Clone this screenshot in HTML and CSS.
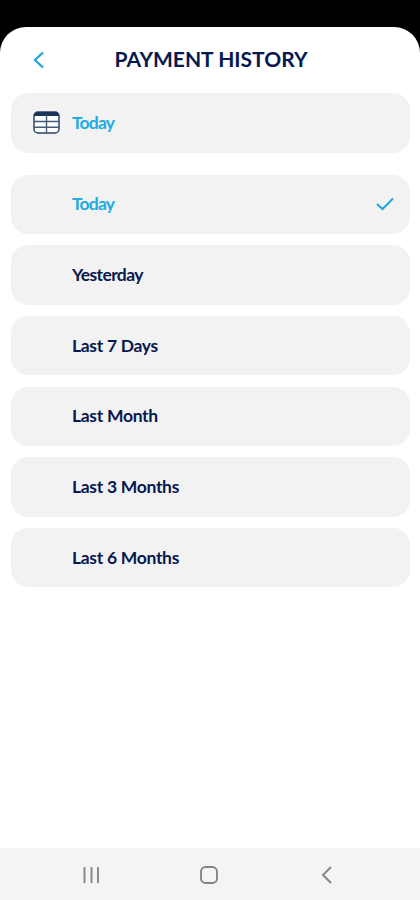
FILE: index.html
```html
<!DOCTYPE html>
<html lang="en">
<head>
    <meta charset="UTF-8">
    <meta name="viewport" content="width=device-width, initial-scale=1.0">
    <title>Payment History</title>
    <link rel="stylesheet" href="styles.css">
</head>
<body>

<div class="screen">
    <header class="header">
        <button class="back" aria-label="Back">
            <svg width="12" height="18" viewBox="0 0 12 18"><path d="M10 1.5L2 9l8 7.5"/></svg>
        </button>
        <h1 class="title">PAYMENT HISTORY</h1>
    </header>

    <main class="content">
        <button class="row selected">
            <svg class="calendar" width="27" height="23" viewBox="0 0 27 23">
                <rect class="frame" x="1" y="1" width="25" height="21" rx="4"/>
                <path class="band" d="M1 5a4 4 0 0 1 4-4h17a4 4 0 0 1 4 4z"/>
                <path class="lines" d="M1 10.5h25M1 16.3h25M13.5 4v18"/>
            </svg>
            <span class="label today">Today</span>
        </button>

        <div class="options">
            <button class="row active">
                <span class="label today">Today</span>
                <svg class="check" width="18" height="14" viewBox="0 0 18 14"><path d="M1 7l5.5 5L17 1.5"/></svg>
            </button>
            <button class="row"><span class="label yesterday">Yesterday</span></button>
            <button class="row"><span class="label">Last 7 Days</span></button>
            <button class="row"><span class="label">Last Month</span></button>
            <button class="row"><span class="label">Last 3 Months</span></button>
            <button class="row"><span class="label">Last 6 Months</span></button>
        </div>
    </main>

    <!-- Android navigation bar -->
    <nav class="navbar">
        <svg width="18" height="18" viewBox="0 0 18 18"><path d="M2.5 1v16M9.5 1v16M16 1v16"/></svg>
        <svg width="18" height="18" viewBox="0 0 18 18"><rect x="1" y="1" width="16" height="16" rx="4.5"/></svg>
        <svg width="18" height="18" viewBox="0 0 18 18"><path d="M13 1L5 9l8 8"/></svg>
    </nav>
</div>

</body>
</html>
```

FILE: styles.css
```css
* {
    box-sizing: border-box;
}
body {
    margin: 0;
    height: 100vh;
    padding-top: 27px;
    background-color: #000;
    font-family: Lato, sans-serif;
    color: #07194f;
}
svg {
    fill: none;
    flex-shrink: 0;
}
button {
    border: none;
    font-family: inherit;
    color: inherit;
    cursor: pointer;
}
.screen {
    display: flex;
    flex-direction: column;
    height: 100%;
    background-color: #fff;
    border-radius: 26px 26px 0 0; /* Rounded sheet on the black status bar */
    overflow: hidden;
}
.header {
    display: grid;
    grid-template-columns: 60px 1fr 60px;
    align-items: center;
    height: 66px;
}
.back {
    display: flex;
    padding: 0 0 1px 33px;
    background: none;
}
.back svg {
    stroke: #20a5dc;
    stroke-width: 2.3;
}
.title {
    margin: 0 -2px 2px 0;
    font-size: 21px;
    font-weight: 700;
    line-height: 26px;
    text-align: center;
    white-space: nowrap;
}
.content {
    flex: 1;
    padding: 0 10px 0 11px;
}
.row {
    display: flex;
    align-items: center;
    width: 100%;
    height: 59.5px;
    padding: 0 16px 0 61px;
    border-radius: 17px;
    background-color: #f2f2f2;
}
.selected {
    padding-left: 22px;
    gap: 12px;
    color: #20abe2;
}
.active {
    color: #20abe2;
}
.label {
    font-size: 17.5px;
    font-weight: 700;
    line-height: 24px;
    letter-spacing: -0.3px;
    white-space: nowrap;
}
.today {
    letter-spacing: -0.8px;
}
.yesterday {
    letter-spacing: -0.6px;
}
.options {
    display: grid;
    gap: 11.2px;
    margin-top: 22px;
}
.calendar .frame {
    fill: #fff;
    stroke: #2b4464;
    stroke-width: 1.5;
}
.calendar .band {
    fill: #17365c;
}
.calendar .lines {
    stroke: #445a75;
    stroke-width: 1.4;
}
.check {
    margin-left: auto;
    stroke: #20a5dc;
    stroke-width: 2;
}
.navbar {
    display: flex;
    justify-content: space-between;
    align-items: center;
    height: 52px;
    padding: 2px 84px 0 82px;
    background-color: #f4f4f4;
}
.navbar svg {
    stroke: #858585;
    stroke-width: 1.9;
}
```
